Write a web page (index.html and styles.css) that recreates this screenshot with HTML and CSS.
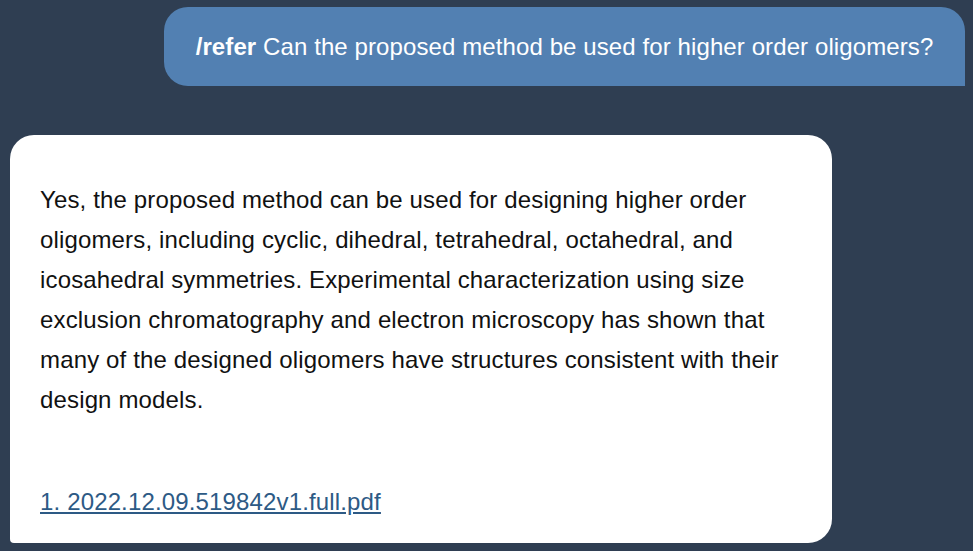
FILE: index.html
```html
<!DOCTYPE html>
<html>
<head>
<meta charset="utf-8">
<link rel="stylesheet" href="styles.css">
</head>
<body>
<div class="chat">
  <div class="msg user">
    <div class="bubble user-bubble"><b>/refer</b> Can the proposed method be used for higher order oligomers?</div>
  </div>
  <div class="msg bot">
    <div class="bubble bot-bubble">
      <p class="answer">Yes, the proposed method can be used for designing higher order oligomers, including cyclic, dihedral, tetrahedral, octahedral, and icosahedral symmetries. Experimental characterization using size exclusion chromatography and electron microscopy has shown that many of the designed oligomers have structures consistent with their design models.</p>
      <a class="ref" href="#">1. 2022.12.09.519842v1.full.pdf</a>
    </div>
  </div>
</div>
</body>
</html>
```

FILE: styles.css
```css
html, body {
  margin: 0;
  padding: 0;
  background: #2f3e52;
  font-family: "Liberation Sans", Arial, Helvetica, sans-serif;
  height: 100%;
  overflow: hidden;
}
.chat {
  display: flex;
  flex-direction: column;
  padding: 7px 8px 0 10px;
}
.msg {
  display: flex;
}
.msg.user {
  justify-content: flex-end;
}
.user-bubble {
  width: 801px;
  box-sizing: border-box;
  height: 79px;
  display: flex;
  align-items: center;
  justify-content: center;
  background: #5280b2;
  color: #fff;
  font-size: 24px;
  letter-spacing: 0.1px;
  border-radius: 24px 24px 0 24px;
  white-space: pre;
}
.msg.bot {
  margin-top: 49px;
}
.bot-bubble {
  width: 822px;
  box-sizing: border-box;
  height: 408px;
  background: #fff;
  color: #111;
  border-radius: 24px 24px 24px 4px;
  padding: 45px 30px 21px 30px;
  font-size: 24px;
  letter-spacing: 0.15px;
  line-height: 40px;
}
.answer {
  margin: 0 0 62px 0;
}
.ref {
  color: #2d5a85;
  text-decoration: underline;
}
```
